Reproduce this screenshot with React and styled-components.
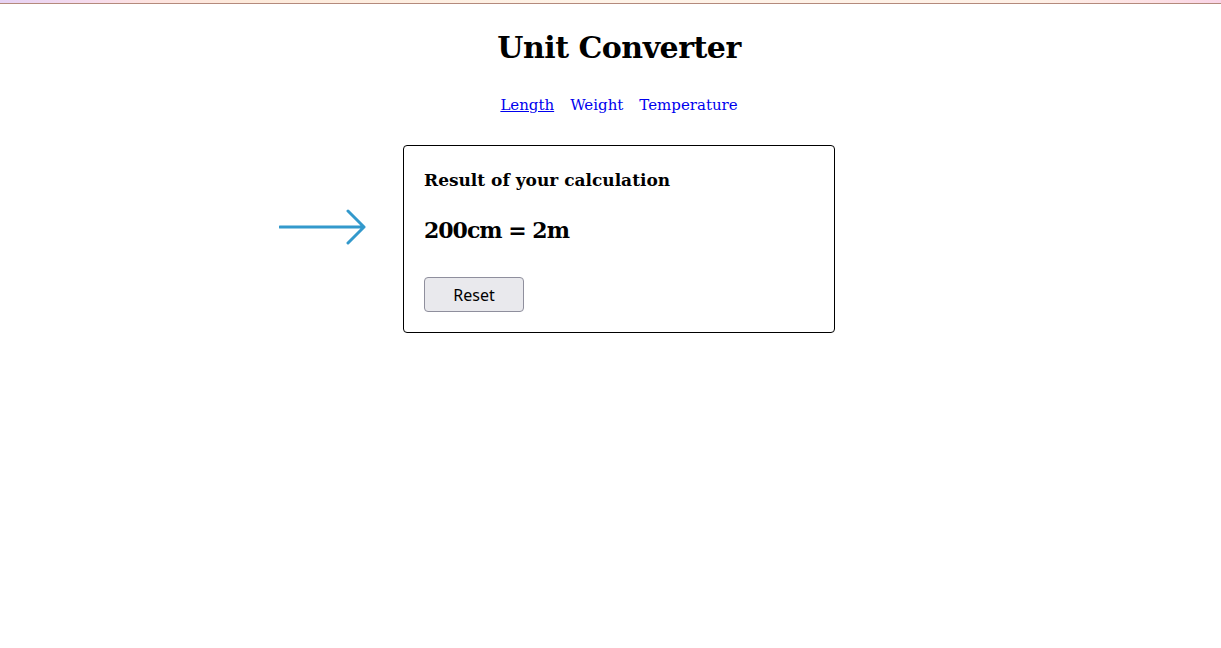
import React from 'react';
import styled, { createGlobalStyle } from "styled-components";

const GlobalStyle = createGlobalStyle`
    body {
        margin: 0;
        font-family: "DejaVu Serif", serif;
        background-color: #fff;
        color: #000;
    }
`;

const TopStrip = styled.div`
    height: 3px;
    background: linear-gradient(to right, #e6d2f4 0%, #f7dcec 8%, #fde3e0 12%, #fdeadb 20%, #fef3e8 50%, #fef0e6 85%, #fcdfe4 95%, #f9d3e6 100%);
    border-bottom: 1px solid #b48a7c;
`;

const Main = styled.main`
    padding: 0 0 0 17px;
    display: flex;
    flex-direction: column;
    align-items: center;
`;

const Title = styled.h1`
    font-size: 30px;
    letter-spacing: -0.5px;
    font-weight: bold;
    margin: 24px 0 0;
    line-height: 40px;
`;

const Nav = styled.nav`
    display: flex;
    gap: 16px;
    margin-top: 25px;
    font-size: 15px;
    line-height: 24px;

    a {
        color: #0000ee;
        text-decoration: none;
    }

    .active {
        text-decoration: underline;
    }
`;

const CardWrap = styled.div`
    position: relative;
    margin-top: 28px;
`;

const Arrow = styled.svg`
    position: absolute;
    right: calc(100% + 36px);
    top: 63px;
`;

const Card = styled.section`
    width: 390px;
    padding: 20px;
    border: 1px solid #000;
    border-radius: 4px;

    h3 {
        font-size: 17px;
        margin: 2px 0 0;
        line-height: 24px;
    }

    h2 {
        font-size: 22px;
        letter-spacing: -1px;
        margin: 23px 0 0;
        line-height: 30px;
    }
`;

const ResetButton = styled.button`
    margin-top: 32px;
    width: 100px;
    height: 35px;
    font-family: "Noto Sans", sans-serif;
    font-size: 16px;
    color: #000;
    background-color: #e9e9ed;
    border: 1px solid #8f8f9d;
    border-radius: 4px;
    cursor: pointer;
`;

function App() {
    return (
        <>
            <GlobalStyle />
            <TopStrip />
            <Main>
                <Title>Unit Converter</Title>
                <Nav>
                    <a href="#length" className="active">Length</a>
                    <a href="#weight">Weight</a>
                    <a href="#temperature">Temperature</a>
                </Nav>
                <CardWrap>
                    <Arrow width="88" height="38" viewBox="0 0 88 38">
                        <path d="M1 19 H85 M69 3 L85 19 L69 35" fill="none" stroke="#3399cc" strokeWidth="3" strokeLinecap="round" strokeLinejoin="round" />
                    </Arrow>
                    <Card>
                        <h3>Result of your calculation</h3>
                        <h2>200cm = 2m</h2>
                        <ResetButton>Reset</ResetButton>
                    </Card>
                </CardWrap>
            </Main>
        </>
    );
}

export default App;
